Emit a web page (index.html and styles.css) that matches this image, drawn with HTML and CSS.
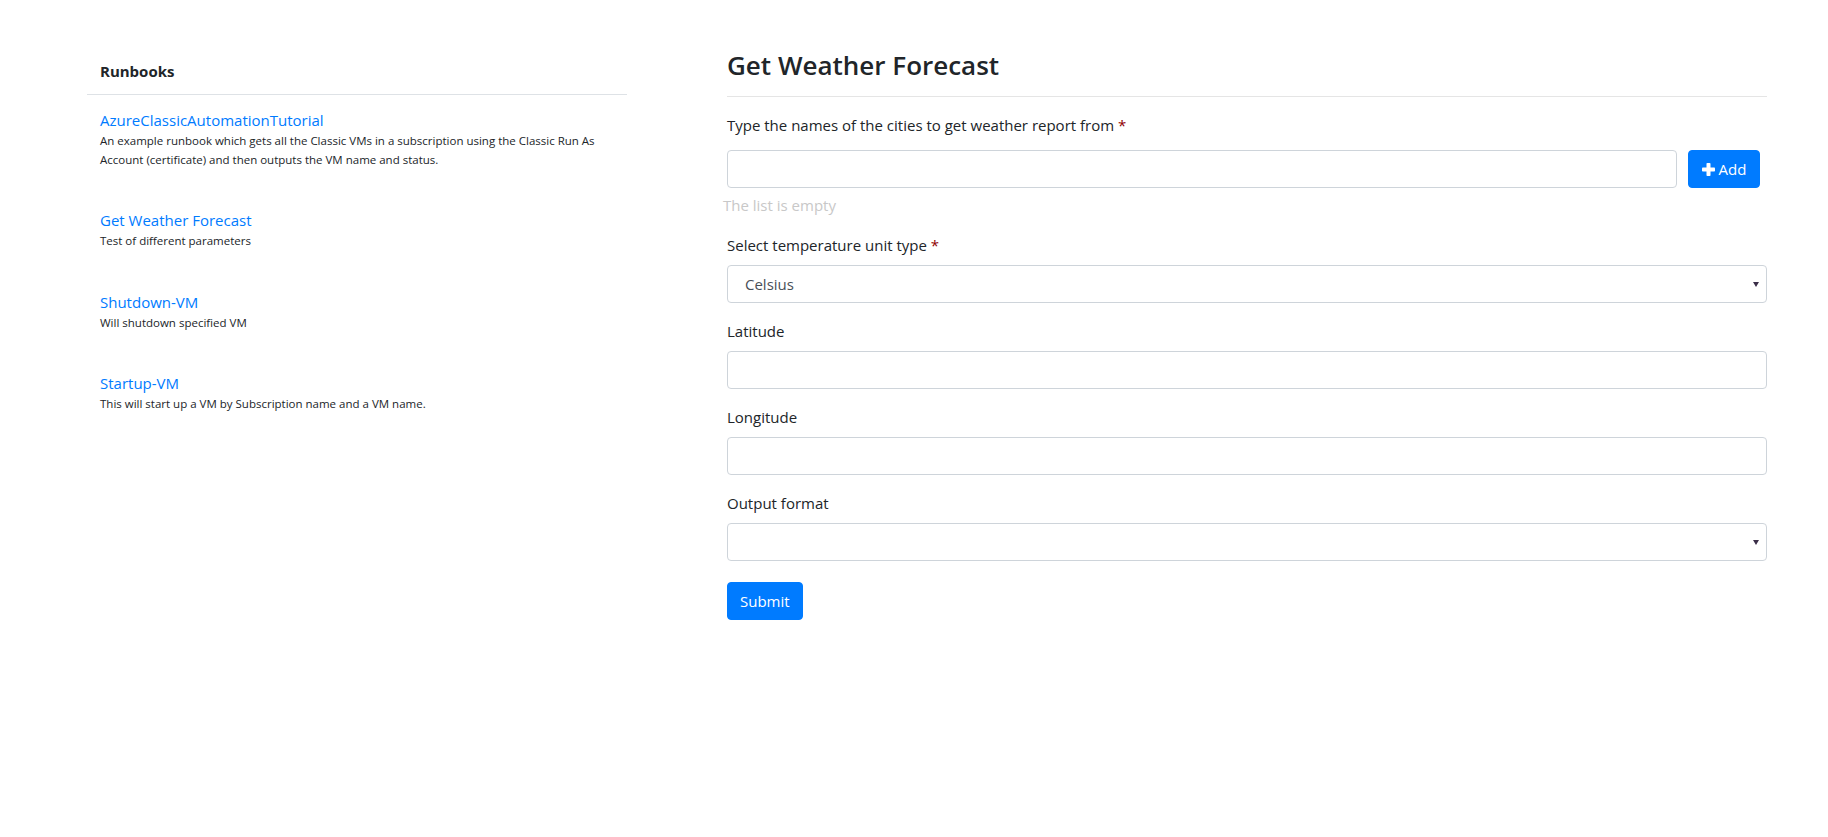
FILE: index.html
```html
<!DOCTYPE html>
<html lang="en">
<head>
<meta charset="utf-8">
<title>Get Weather Forecast</title>
<link rel="stylesheet" href="styles.css">
</head>
<body>
<div class="page">
  <aside class="sidebar">
    <div class="sidebar-head">Runbooks</div>
    <ul class="runbook-list">
      <li class="runbook">
        <a class="runbook-link" href="#">AzureClassicAutomationTutorial</a>
        <p class="runbook-desc">An example runbook which gets all the Classic VMs in a subscription using the Classic Run As Account (certificate) and then outputs the VM name and status.</p>
      </li>
      <li class="runbook">
        <a class="runbook-link" href="#">Get Weather Forecast</a>
        <p class="runbook-desc">Test of different parameters</p>
      </li>
      <li class="runbook">
        <a class="runbook-link" href="#">Shutdown-VM</a>
        <p class="runbook-desc">Will shutdown specified VM</p>
      </li>
      <li class="runbook">
        <a class="runbook-link" href="#">Startup-VM</a>
        <p class="runbook-desc">This will start up a VM by Subscription name and a VM name.</p>
      </li>
    </ul>
  </aside>

  <main class="content">
    <h3 class="title">Get Weather Forecast</h3>
    <hr class="rule">
    <form class="form">
      <div class="group">
        <label class="label">Type the names of the cities to get weather report from <span class="req">*</span></label>
        <div class="add-row">
          <input class="control" type="text">
          <button class="btn btn-add" type="button">
            <svg class="plus" width="13" height="13" viewBox="0 0 13 13" aria-hidden="true"><rect x="4.5" y="0" width="4" height="13" rx="0.8"/><rect x="0" y="4.5" width="13" height="4" rx="0.8"/></svg>
            <span>Add</span>
          </button>
        </div>
        <div class="empty-note">The list is empty</div>
      </div>

      <div class="group">
        <label class="label">Select temperature unit type <span class="req">*</span></label>
        <div class="select-wrap">
          <select class="control select">
            <option>Celsius</option>
            <option>Fahrenheit</option>
          </select>
        </div>
      </div>

      <div class="group">
        <label class="label">Latitude</label>
        <input class="control" type="text">
      </div>

      <div class="group">
        <label class="label">Longitude</label>
        <input class="control" type="text">
      </div>

      <div class="group">
        <label class="label">Output format</label>
        <div class="select-wrap">
          <select class="control select">
            <option></option>
          </select>
        </div>
      </div>

      <button class="btn btn-submit" type="submit">Submit</button>
    </form>
  </main>
</div>
</body>
</html>
```

FILE: styles.css
```css
body {
  margin: 0;
  font-family: "Open Sans", "Noto Sans", sans-serif;
  color: #212529;
  background: #fff;
}

.page {
  display: flex;
  gap: 100px;
  padding-left: 87px;
}

/* Sidebar */
.sidebar {
  width: 540px;
  flex: none;
  padding-top: 59px;
}

.sidebar-head {
  font-size: 15px;
  font-weight: 700;
  line-height: 24px;
  padding: 0 13px 11px;
  border-bottom: 1px solid #dee2e6;
}

.runbook-list {
  list-style: none;
  margin: 0;
  padding: 13px 13px 0;
  display: flex;
  flex-direction: column;
  gap: 38.9px;
}

.runbook-link {
  display: block;
  font-size: 15px;
  line-height: 24px;
  color: #007bff;
  text-decoration: none;
}

.runbook-desc {
  margin: 0;
  font-size: 11.5px;
  line-height: 18.7px;
  color: #212529;
}

/* Content */
.content {
  width: 1040px;
  flex: none;
  padding-top: 48px;
}

.title {
  margin: 0;
  font-size: 26px;
  font-weight: 600;
  line-height: 34px;
  color: #212529;
}

.rule {
  margin: 14px 0 16px;
  border: 0;
  border-top: 1px solid #e5e5e5;
}

.group {
  margin-bottom: 16px;
}

.label {
  display: block;
  font-size: 15px;
  line-height: 24px;
  margin-bottom: 8px;
}

.req {
  color: #8f0000;
}

.control {
  display: block;
  width: 100%;
  height: 38px;
  box-sizing: border-box;
  border: 1px solid #ced4da;
  border-radius: 4px;
  background: #fff;
  font-family: inherit;
  font-size: 15px;
  color: #495057;
  padding: 0 12px;
  margin: 0;
}

.add-row {
  display: flex;
  gap: 11px;
  padding-right: 7px;
  margin-top: 13px;
}

.add-row .control {
  flex: 1;
  width: auto;
  min-width: 0;
}

.btn {
  display: inline-flex;
  align-items: center;
  justify-content: center;
  height: 38px;
  box-sizing: border-box;
  border: 1px solid #007bff;
  border-radius: 4px;
  background: #007bff;
  color: #fff;
  font-family: inherit;
  font-size: 15px;
  line-height: 24px;
  cursor: pointer;
}

.btn-add {
  flex: none;
  width: 72px;
  padding: 0;
  gap: 4px;
}

.plus {
  fill: #fff;
  display: block;
}

.btn-submit {
  margin-top: 5px;
  padding: 0 12px;
}

.empty-note {
  margin: 5px 0 0 -4px;
  font-size: 15px;
  line-height: 24px;
  color: #c8c8c8;
}

.select-wrap {
  position: relative;
}

.select {
  -webkit-appearance: none;
  appearance: none;
  padding-left: 17px;
}

.select-wrap::after {
  content: "";
  position: absolute;
  right: 8px;
  top: 17px;
  border-left: 3.5px solid transparent;
  border-right: 3.5px solid transparent;
  border-top: 5px solid #3b2e48;
  pointer-events: none;
}
```
